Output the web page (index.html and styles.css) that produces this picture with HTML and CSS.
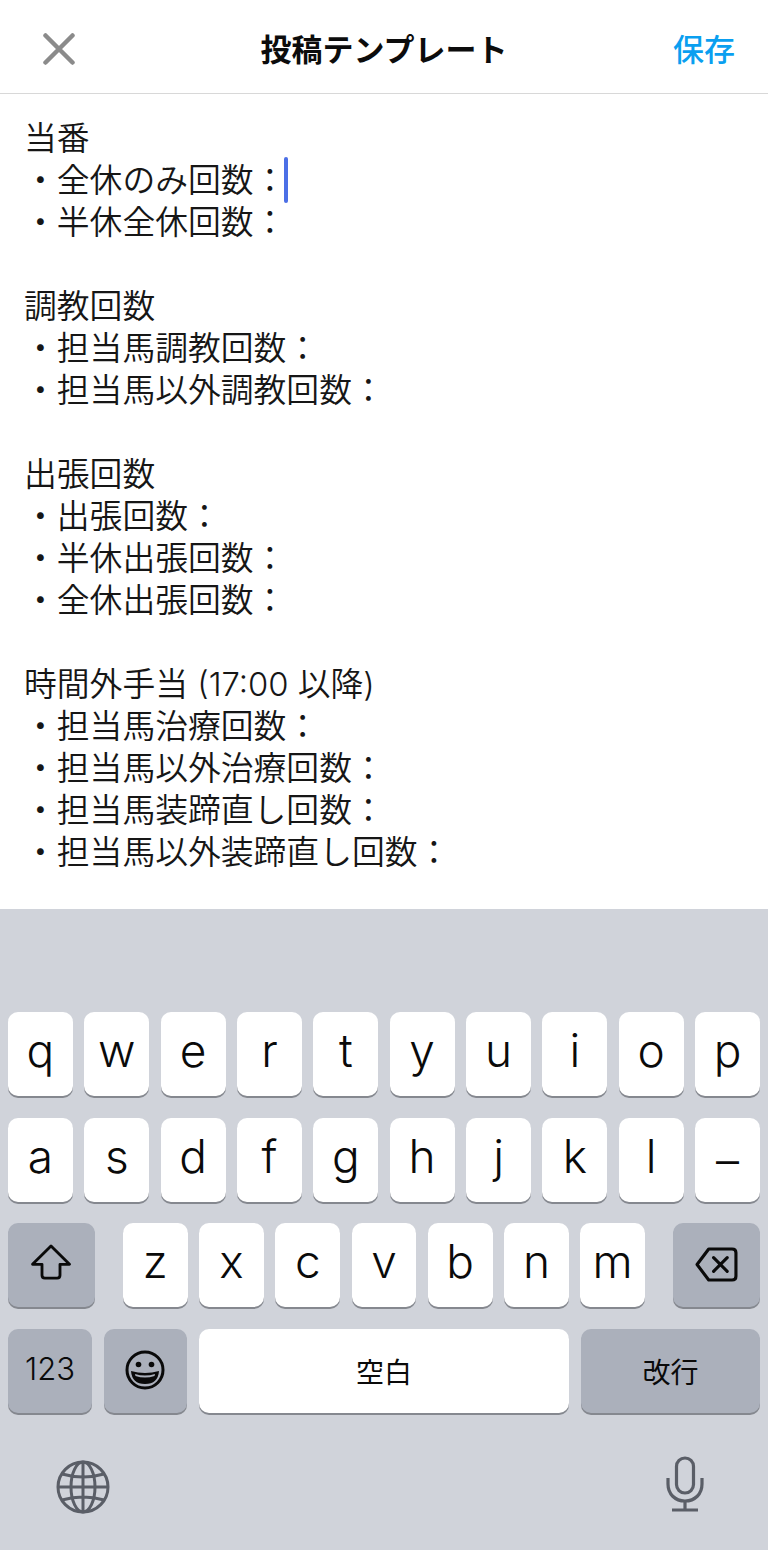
FILE: index.html
```html
<!DOCTYPE html>
<html lang="ja">
<head>
<meta charset="utf-8">
<title>投稿テンプレート</title>
<link rel="stylesheet" href="styles.css">
</head>
<body>
<div class="screen">
  <header class="topbar">
    <svg class="close" viewBox="0 0 32 32" aria-label="閉じる"><path d="M2.5 2.5 L29.5 29.5 M29.5 2.5 L2.5 29.5"/></svg>
    <h1 class="title">投稿テンプレート</h1>
    <span class="save">保存</span>
  </header>
  <main class="editor">
    <p>当番</p>
    <p>・全休のみ回数：<span class="caret"></span></p>
    <p>・半休全休回数：</p>
    <p class="blank"></p>
    <p>調教回数</p>
    <p>・担当馬調教回数：</p>
    <p>・担当馬以外調教回数：</p>
    <p class="blank"></p>
    <p>出張回数</p>
    <p>・出張回数：</p>
    <p>・半休出張回数：</p>
    <p>・全休出張回数：</p>
    <p class="blank"></p>
    <p>時間外手当 (17:00 以降)</p>
    <p>・担当馬治療回数：</p>
    <p>・担当馬以外治療回数：</p>
    <p>・担当馬装蹄直し回数：</p>
    <p>・担当馬以外装蹄直し回数：</p>
  </main>
  <section class="keyboard">
    <div class="row grid10">
      <div class="key">q</div><div class="key">w</div><div class="key">e</div><div class="key">r</div><div class="key">t</div><div class="key">y</div><div class="key">u</div><div class="key">i</div><div class="key">o</div><div class="key">p</div>
    </div>
    <div class="row grid10">
      <div class="key">a</div><div class="key">s</div><div class="key">d</div><div class="key">f</div><div class="key">g</div><div class="key">h</div><div class="key">j</div><div class="key">k</div><div class="key">l</div><div class="key dash">–</div>
    </div>
    <div class="row third">
      <div class="key dark">
        <svg class="ico-shift" viewBox="0 0 44 38"><path d="M22 2 L41.5 21.5 L31.5 21.5 L31.5 33 Q31.5 36 28.5 36 L15.5 36 Q12.5 36 12.5 33 L12.5 21.5 L2.5 21.5 Z"/></svg>
      </div>
      <div class="letters">
        <div class="key">z</div><div class="key">x</div><div class="key">c</div><div class="key">v</div><div class="key">b</div><div class="key">n</div><div class="key">m</div>
      </div>
      <div class="key dark">
        <svg class="ico-del" viewBox="0 0 44 36"><path class="outline" d="M14 2 L38 2 Q42 2 42 6 L42 30 Q42 34 38 34 L14 34 L2 18 Z"/><path class="outline" d="M19 11 L33 25 M33 11 L19 25"/></svg>
      </div>
    </div>
    <div class="row fourth">
      <div class="key dark small">123</div>
      <div class="key dark">
        <svg class="ico-emoji" viewBox="0 0 40 40"><circle class="face" cx="20" cy="20" r="18"/><circle class="fill" cx="13.5" cy="14.5" r="2.8"/><circle class="fill" cx="26.5" cy="14.5" r="2.8"/><path class="fill" d="M6 21 Q20 25 34 21 Q33 34 20 34 Q7 34 6 21 Z"/><path class="teeth" d="M10 24 Q20 27 30 24 L29.5 26 Q20 29 10.5 26 Z"/></svg>
      </div>
      <div class="key cjk">空白</div>
      <div class="key dark cjk">改行</div>
    </div>
    <div class="bottom">
      <svg class="ico-globe" viewBox="0 0 54 54"><circle cx="27" cy="27" r="25"/><ellipse cx="27" cy="27" rx="12" ry="25"/><path d="M27 2 V52 M2 27 H52 M6 14 Q27 20 48 14 M6 40 Q27 34 48 40"/></svg>
      <svg class="ico-mic" viewBox="0 0 38 56"><rect x="10.5" y="2" width="17" height="35" rx="8.5"/><path d="M2 22 V28 C2 38 9 45 19 45 C29 45 36 38 36 28 V22 M19 45 V54 M6 54 H32"/></svg>
    </div>
  </section>
</div>
</body>
</html>
```
FILE: styles.css
```css
* { box-sizing: border-box; }
html, body { margin: 0; padding: 0; background: #fff; }
.screen {
  width: 768px;
  height: 1550px;
  display: flex;
  flex-direction: column;
  overflow: hidden;
  font-family: "Inter", "Noto Sans CJK JP", sans-serif;
  color: #111;
}
.topbar {
  flex: 0 0 93.5px;
  display: grid;
  grid-template-columns: 1fr auto 1fr;
  align-items: center;
  padding: 3px 33px 0;
  border-bottom: 1.5px solid #d8d8d8;
}
.close { width: 32px; height: 32px; margin: 3px 0 0 10px; }
.close path { fill: none; stroke: #8b8b8b; stroke-width: 4.5; stroke-linecap: round; }
.title {
  margin: 0;
  font-size: 31px;
  font-weight: 700;
  line-height: 40px;
  color: #0c0c0c;
  font-family: "Noto Sans CJK JP", sans-serif;
}
.save {
  justify-self: end;
  font-size: 31px;
  font-weight: 500;
  line-height: 40px;
  color: #0a9ff0;
  font-family: "Noto Sans CJK JP", sans-serif;
}
.editor {
  flex: 1;
  padding: 23.5px 24px 0;
  background: #fff;
}
.editor p {
  margin: 0;
  height: 42px;
  font-size: 32.8px;
  font-weight: 350;
  line-height: 42px;
  color: #161616;
  white-space: nowrap;
}
.caret {
  display: inline-block;
  width: 4px;
  height: 46px;
  margin: -7px 0 -1px -2px;
  vertical-align: middle;
  border-radius: 2px;
  background: #4c6fe6;
}
.keyboard {
  flex: 0 0 641px;
  background: #d0d3da;
  padding: 103px 8px 0;
  display: flex;
  flex-direction: column;
  gap: 21.6px;
}
.row { height: 84px; }
.grid10 {
  display: grid;
  grid-template-columns: repeat(10, 1fr);
  column-gap: 11.5px;
}
.third {
  display: flex;
  justify-content: space-between;
}
.third > .key { width: 87px; }
.letters {
  width: 522px;
  display: grid;
  grid-template-columns: repeat(7, 1fr);
  column-gap: 11.5px;
}
.fourth {
  display: grid;
  grid-template-columns: 84px 83px 370px 179px;
  column-gap: 12px;
}
.key {
  display: flex;
  align-items: center;
  justify-content: center;
  height: 84px;
  padding-bottom: 8px;
  background: #fff;
  border-radius: 10px;
  box-shadow: 0 2px 0 #85888f;
  font-size: 46px;
  font-weight: 300;
  line-height: 1;
  color: #0a0a0a;
}
.key.dash { padding-bottom: 0; }
.key.dark { background: #abb0bb; }
.key.small { font-size: 31px; padding-bottom: 4px; }
.key.cjk { font-size: 28px; padding-bottom: 0; font-weight: 400; font-family: "Noto Sans CJK JP", sans-serif; }
.ico-shift { width: 42px; height: 36px; margin: 2px 2px 0 0; }
.ico-shift path { fill: none; stroke: #0a0a0a; stroke-width: 3; stroke-linejoin: round; }
.ico-del { width: 43px; height: 35px; margin-top: 6px; }
.ico-del .outline { fill: none; stroke: #0a0a0a; stroke-width: 3.2; stroke-linejoin: round; stroke-linecap: round; }
.ico-emoji { width: 40px; height: 40px; margin: 6px 2px 0 0; }
.ico-emoji .face { fill: none; stroke: #0a0a0a; stroke-width: 3; }
.ico-emoji .fill { fill: #0a0a0a; }
.ico-emoji .teeth { fill: #abb0bb; }
.bottom {
  display: flex;
  justify-content: space-between;
  align-items: flex-start;
  padding: 26px 56px 0 48px;
}
.ico-globe { width: 54px; height: 54px; }
.ico-globe circle, .ico-globe ellipse, .ico-globe path { fill: none; stroke: #5a5e67; stroke-width: 3; }
.ico-mic { width: 38px; height: 56px; margin-top: -4px; }
.ico-mic rect, .ico-mic path { fill: none; stroke: #5a5e67; stroke-width: 3.2; }
```
